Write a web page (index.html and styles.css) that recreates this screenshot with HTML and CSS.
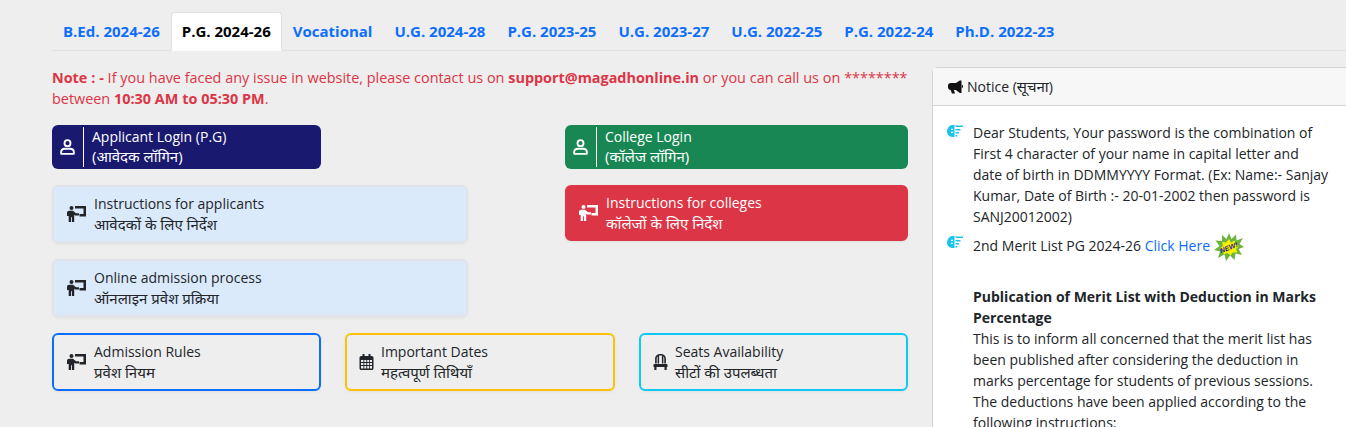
FILE: index.html
```html
<!DOCTYPE html>
<html lang="en">
<head>
  <meta charset="UTF-8" />
  <meta name="viewport" content="width=device-width, initial-scale=1.0"/>
  <title>Admission Portal</title>
  <link rel="stylesheet" href="styles.css">
</head>
<body>

<svg class="sprites" width="0" height="0">
  <symbol id="i-user" viewBox="0 0 16 17">
    <circle cx="8" cy="4.400" r="3.200" fill="none" stroke="currentColor" stroke-width="2"/>
    <path d="M1.200 15.800v-1.600c0-2.400 1.800-3.800 4-3.800h5.600c2.200 0 4 1.400 4 3.800v1.600z" fill="none" stroke="currentColor" stroke-width="2" stroke-linejoin="round"/>
  </symbol>
  <symbol id="i-teach" viewBox="0 0 19 16">
    <circle cx="4.500" cy="2" r="2"/>
    <path d="M0 7c0-1.300 1-2.200 2.200-2.200H6L9 7.200h3v2.300H8.200L7.200 8.800V16H4.900v-4.800H4V16H1.700v-6H0z"/>
    <path d="M8 0H19v10.500h-6.500V8h4V2.500H8z"/>
  </symbol>
  <symbol id="i-calendar" viewBox="0 0 14 16">
    <path d="M3 0h2v2h4V0h2v2h1.200C13.200 2 14 2.800 14 3.800V14.200c0 1-.8 1.800-1.800 1.800H1.800C.8 16 0 15.200 0 14.200V3.800C0 2.800.8 2 1.800 2H3z"/>
    <path fill="#eee" d="M1.500 6h2.400v2H1.500zM4.800 6h2v2h-2zM7.700 6h2v2h-2zM10.500 6h2v2h-2zM1.500 9h2.400v2H1.500zM4.800 9h2v2h-2zM7.700 9h2v2h-2zM10.500 9h2v2h-2zM1.500 12h2.400v2.400H1.500zM4.800 12h2v2.400h-2zM7.700 12h2v2.400h-2zM10.500 12h2v2.400h-2z"/>
  </symbol>
  <symbol id="i-chair" viewBox="0 0 14 16">
    <path d="M7 0C3.800 0 1.600 2 1.600 4.800V9.500h1.600V4.400c0-.9.300-1.600.9-2.100V9.500h1.500V1.600h2.800V9.500h1.500V2.300c.6.500.9 1.200.9 2.100V9.500h1.600V4.800C12.400 2 10.200 0 7 0z"/>
    <path d="M1 10h12c.6 0 1 .4 1 1v2H0v-2c0-.6.400-1 1-1zM.8 13h2.200v3H.8zM11 13h2.200v3H11z"/>
  </symbol>
  <symbol id="i-bullhorn" viewBox="0 0 16 14">
    <path d="M12.600 0h1.800v13.400h-1.800L8.400 10.200H6.200l1.300 3.800H4.200L2.900 10.200C1.300 10.200 0 8.900 0 7.300V5.700C0 4 1.300 2.800 3 2.800h5.400zM14.800 4.600c.7.200 1.200.9 1.200 1.800s-.5 1.600-1.200 1.800z"/>
  </symbol>
  <symbol id="i-point" viewBox="0 0 16 12">
    <path fill="#19c3ee" d="M4.500 0H7.500V12H6C2.500 12 0 9.800 0 6.500 0 3.500 1.800 1.200 4.500 0z"/>
    <path fill="#19c3ee" d="M8.500 .6H16v1.500H8.500zM8.500 4h5v1.400h-5zM8.500 7h3.500v1.400H8.500zM8.500 10h1.800v1.400H8.500z"/>
    <path fill="#fff" d="M4 3.800h2v1.200H4zM4 6.800h2V8H4z"/>
  </symbol>
</svg>

<div class="page">
  <ul class="tabs">
    <li><a href="#">B.Ed. 2024-26</a></li>
    <li><a href="#" class="active">P.G. 2024-26</a></li>
    <li><a href="#">Vocational</a></li>
    <li><a href="#">U.G. 2024-28</a></li>
    <li><a href="#">P.G. 2023-25</a></li>
    <li><a href="#">U.G. 2023-27</a></li>
    <li><a href="#">U.G. 2022-25</a></li>
    <li><a href="#">P.G. 2022-24</a></li>
    <li><a href="#">Ph.D. 2022-23</a></li>
  </ul>

  <div class="content">
    <div class="left">
      <p class="note"><b>Note : -</b> If you have faced any issue in website, please contact us on <b>support@magadhonline.in</b> or you can call us on ******** between <b>10:30 AM to 05:30 PM</b>.</p>

      <div class="two-col">
        <a href="#" class="btn login navy">
          <span class="login-icon"><svg class="ico-user"><use href="#i-user"/></svg></span>
          <span class="label">Applicant Login (P.G)<br><span class="hi">(आवेदक लॉगिन)</span></span>
        </a>
        <a href="#" class="btn login green">
          <span class="login-icon"><svg class="ico-user"><use href="#i-user"/></svg></span>
          <span class="label">College Login<br><span class="hi">(कॉलेज लॉगिन)</span></span>
        </a>

        <a href="#" class="btn tall pale">
          <svg class="ico-teach"><use href="#i-teach"/></svg>
          <span class="label">Instructions for applicants<br><span class="hi">आवेदकों के लिए निर्देश</span></span>
        </a>
        <a href="#" class="btn tall red">
          <svg class="ico-teach"><use href="#i-teach"/></svg>
          <span class="label">Instructions for colleges<br><span class="hi">कॉलेजों के लिए निर्देश</span></span>
        </a>

        <a href="#" class="btn tall pale">
          <svg class="ico-teach"><use href="#i-teach"/></svg>
          <span class="label">Online admission process<br><span class="hi">ऑनलाइन प्रवेश प्रक्रिया</span></span>
        </a>
      </div>

      <div class="three-col">
        <a href="#" class="btn tall outline blue">
          <svg class="ico-teach"><use href="#i-teach"/></svg>
          <span class="label">Admission Rules<br><span class="hi">प्रवेश नियम</span></span>
        </a>
        <a href="#" class="btn tall outline amber">
          <svg class="ico-small"><use href="#i-calendar"/></svg>
          <span class="label">Important Dates<br><span class="hi">महत्वपूर्ण तिथियाँ</span></span>
        </a>
        <a href="#" class="btn tall outline cyan">
          <svg class="ico-small"><use href="#i-chair"/></svg>
          <span class="label">Seats Availability<br><span class="hi">सीटों की उपलब्धता</span></span>
        </a>
      </div>
    </div>

    <div class="notice">
      <div class="notice-head">
        <svg class="ico-horn"><use href="#i-bullhorn"/></svg>
        <span>Notice (<span class="hi">सूचना</span>)</span>
      </div>
      <div class="notice-body">
        <div class="item">
          <svg class="ico-point"><use href="#i-point"/></svg>
          <p>Dear Students, Your password is the combination of First 4 character of your name in capital letter and date of birth in DDMMYYYY Format. (Ex: Name:- Sanjay Kumar, Date of Birth :- 20-01-2002 then password is SANJ20012002)</p>
        </div>
        <div class="item">
          <svg class="ico-point"><use href="#i-point"/></svg>
          <p>2nd Merit List PG 2024-26 <a href="#">Click Here</a>
            <svg class="new" viewBox="0 0 30 28">
              <polygon fill="#6cb33f" points="15,0 17.500,6 22,1.500 22.500,7.500 29,5 25.500,11 30,14 24.500,16 28,22 21.500,20.500 20.500,27 16,22.500 12,28 10.500,21.500 4,25 6,18.500 0,17 5.500,13 1.500,7.500 8,8 8,2 12.500,6"/>
              <polygon fill="#f5f000" points="15,6 17,9.500 21,7.500 21,11.500 25,13 22,16 23.500,19.500 19,19.500 16.500,22.500 13.500,20 9.500,21.500 9.500,17.500 5.500,15.500 9,13 8,9 12,9.500"/>
              <text x="15" y="17" text-anchor="middle" transform="rotate(-22 15 15)" class="new-text">NEW!</text>
            </svg>
          </p>
        </div>
        <div class="item plain">
          <p><b>Publication of Merit List with Deduction in Marks Percentage</b><br>This is to inform all concerned that the merit list has been published after considering the deduction in marks percentage for students of previous sessions. The deductions have been applied according to the following instructions:</p>
        </div>
      </div>
    </div>
  </div>
</div>

</body>
</html>
```

FILE: styles.css
```css
* {
  box-sizing: border-box;
}

html, body {
  height: 100%;
  overflow: hidden;
}

body {
  margin: 0;
  background: #eeeeee;
  color: #212529;
  font-family: 'Open Sans', 'Noto Sans', 'Liberation Sans', sans-serif;
  font-size: 14px;
  line-height: 21px;
}

a {
  text-decoration: none;
}

.sprites {
  position: absolute;
}

.page {
  padding: 12px 0 0 52px;
}

/* tabs */
.tabs {
  display: flex;
  margin: 0;
  padding: 0;
  list-style: none;
  border-bottom: 1px solid #dee2e6;
}

.tabs li {
  margin-bottom: -1px;
}

.tabs a {
  display: block;
  padding: 7px 10px;
  height: 39px;
  border: 1px solid transparent;
  border-radius: 4px 4px 0 0;
  color: #0d6efd;
  font-size: 15px;
  font-weight: 700;
  line-height: 22px;
}

.tabs a.active {
  background: #fff;
  border-color: #dee2e6 #dee2e6 #fff;
  color: #000;
}

.content {
  display: flex;
  gap: 24px;
  padding-top: 16px;
}

.left {
  width: 856px;
  flex: none;
}

.note {
  margin: 0 0 16px;
  color: #dc3545;
  font-size: 14.400px;
  word-spacing: 0.100px;
}

/* grids */
.two-col {
  display: grid;
  grid-template-columns: 416px 343px;
  justify-content: space-between;
  gap: 16px 0;
  margin-bottom: 16px;
}

.three-col {
  display: grid;
  grid-template-columns: 269px 270px 269px;
  justify-content: space-between;
}

/* buttons */
.btn {
  display: flex;
  align-items: center;
  border-radius: 6px;
  color: #212529;
}

.login {
  height: 44px;
  padding: 2px 0;
  color: #fff;
  line-height: 20px;
}

.login-icon {
  display: flex;
  align-items: center;
  justify-content: center;
  flex: none;
  width: 32px;
  height: 40px;
  border-right: 1px solid #fff;
}

.login .label {
  padding-left: 8px;
}

.ico-user {
  width: 15px;
  height: 16px;
}

.navy {
  width: 269px;
  background: #191970;
}

.green {
  background: #198754;
}

.tall {
  height: 58px;
  padding-left: 13px;
  border: 2px solid #e0e4ea;
  box-shadow: 0 1px 3px rgba(0,0,0,0.06);
}

.tall .label {
  line-height: 21px;
}

.hi {
  font-size: 15px;
  line-height: 1;
}

.pale {
  background: #dbeafb;
}

.tall.red {
  align-self: start;
  height: 56px;
  padding-left: 12px;
  background: #dc3545;
  border-color: #dc3545;
  color: #fff;
}

.outline.blue {
  border-color: #0d6efd;
}

.outline.amber {
  padding-left: 12px;
  border-color: #ffc107;
}

.outline.cyan {
  padding-left: 12px;
  border-color: #0dcaf0;
}

.ico-teach {
  flex: none;
  width: 19px;
  height: 16px;
  margin-right: 8px;
  fill: currentColor;
}

.ico-small {
  flex: none;
  width: 15px;
  height: 16px;
  margin-right: 7px;
  fill: currentColor;
}

/* notice card */
.notice {
  width: 440px;
  flex: none;
  background: #fff;
  border: 1px solid #d3d3d3;
  border-radius: 6px 6px 0 0;
}

.notice-head {
  display: flex;
  align-items: center;
  gap: 4px;
  height: 38px;
  padding: 0 15px;
  background: #f7f7f7;
  border-bottom: 1px solid #d3d3d3;
}

.ico-horn {
  width: 15px;
  height: 14px;
  fill: #111;
}

.notice-body {
  padding: 16px 13px;
}

.item {
  display: flex;
  width: 385px;
  margin-bottom: 6px;
}

.item p {
  margin: 0;
}

.item.plain {
  margin-top: 25px;
  padding-left: 27px;
}

.ico-point {
  flex: none;
  width: 16px;
  height: 12px;
  margin: 3px 10px 0 1px;
}

.new {
  width: 30px;
  height: 28px;
  vertical-align: middle;
}

.new-text {
  font-family: 'Liberation Sans', sans-serif;
  font-size: 7px;
  font-weight: 700;
  font-style: italic;
  fill: #3a1a8a;
}

.notice-body a {
  color: #0d6efd;
}
```
